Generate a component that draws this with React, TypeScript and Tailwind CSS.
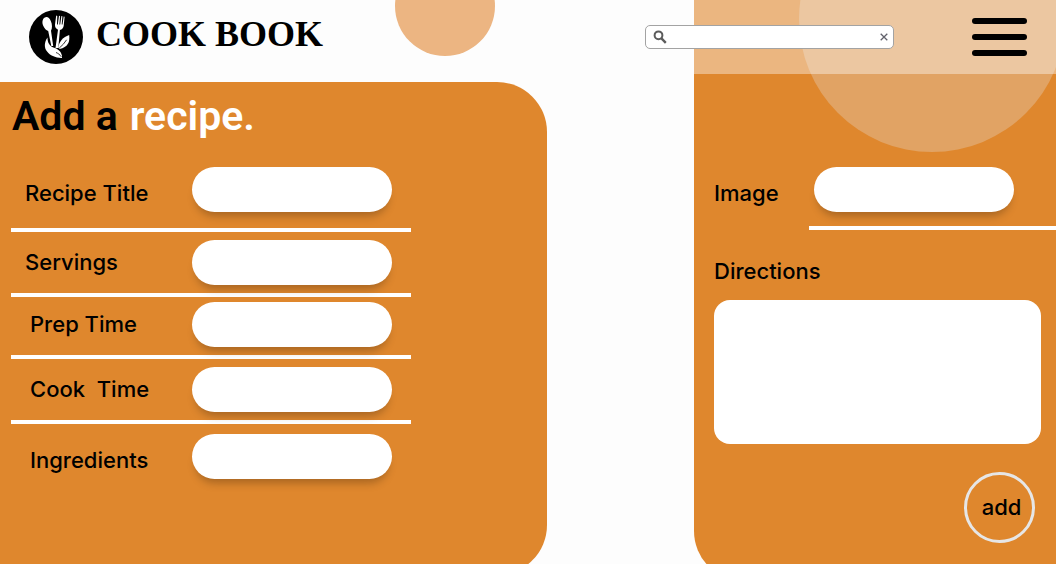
import React from "react";

type Field = { id: string; label: string; row: string };

const fields: Field[] = [
  { id: "title", label: "Recipe Title", row: "h-[65px] items-end border-b-4 pb-4 pl-3.5" },
  { id: "servings", label: "Servings", row: "h-[65px] items-center border-b-4 pl-3.5" },
  { id: "prep", label: "Prep Time", row: "h-[62px] items-center border-b-4 pb-1 pl-[19px]" },
  { id: "cook", label: "Cook  Time", row: "h-[65px] items-center border-b-4 pl-[19px]" },
  { id: "ingredients", label: "Ingredients", row: "h-[55px] items-end pl-[19px]" },
];

const labelClass = "whitespace-pre text-[22px] font-medium leading-[37px] text-black";
const pillClass =
  "h-[45px] w-[200px] shrink-0 rounded-full bg-white px-5 text-lg outline-none shadow-[0_8px_8px_-4px_rgba(0,0,0,0.25)]";

function Logo() {
  return (
    <svg viewBox="0 0 54 54" className="size-[54px] shrink-0" aria-hidden="true">
      <circle cx="27" cy="27" r="27" fill="#000" />
      <g fill="#fff">
        <path d="M17.200 7C13.600 7.600 12.600 12 14.200 15.800c1.100 2.700 3.100 4.600 5 5.300L22.300 36l1.900-.1-2.200-15.200c1.400-2.400 1.300-6.700-.2-9.800C20.700 8.300 19 6.800 17.200 7z" />
        <path d="M27.200 5.500 26 14.500c-.2 2.600 1 4.300 3 5.200L26.500 38h2.800l1.600-18c2.200-.6 3.500-2 3.800-4.300l.9-9-.9-.1-1.200 8h-.8l.7-8.400-1-.1-1.200 8.400h-.8l.6-8.600-1-.1-1.200 8.600h-.8l.3-8.400z" />
        <path d="M18.500 27.500c-3.400 4.800-3.600 10.500-.2 14.300 2.600 3.400 7.500 6 14.700 6.200-.7-4.500-3.600-8.200-8.200-10-3.900-1.700-6.500-5.300-6.300-10.500z" />
        <path d="M20 37c3.500.4 7.100.7 10 3.400 2.300 2 3.300 4.600 3 7.600-5.900-1.600-11.200-4.800-13-11z" />
        <path d="M40.200 25c.9 7.200-1.500 12.400-9.600 13.900l-1.400-1.400c1.100-6 4.700-10.400 11-12.500z" />
      </g>
      <path d="M30.300 38c2.900-2.300 5.300-5 7.300-8.200M27 42.500c2 .8 3.900 2.100 5.300 4.300" stroke="#000" strokeWidth=".8" fill="none" />
    </svg>
  );
}

function Header() {
  return (
    <header className="relative z-10 flex h-[74px] items-start self-start bg-[#fdfdfd]/40 pl-[29px] pr-[29px] [grid-area:1/1]">
      <div className="flex items-start gap-[13px] pt-2.5">
        <Logo />
        <h1 className="whitespace-nowrap font-['Liberation_Serif',serif] text-[36px] font-bold leading-[48px] text-black">
          COOK BOOK
        </h1>
      </div>
      <div className="absolute -top-11 left-[395px] size-[100px] rounded-full bg-[#ecb582]" />
      <div className="ml-auto mr-[78px] mt-[25px] flex h-6 w-[249px] items-center rounded-[5px] border border-[#a3a3a3] bg-white pl-[7px] pr-[5px]">
        <svg viewBox="0 0 14 14" className="size-3.5 shrink-0" aria-hidden="true">
          <circle cx="5.500" cy="5.300" r="3.900" fill="none" stroke="#5c5c5c" strokeWidth="2" />
          <path d="M8.200 8.200 12.800 12.800" stroke="#5c5c5c" strokeWidth="2.400" />
        </svg>
        <input aria-label="Search recipes" className="h-5 min-w-0 flex-1 bg-transparent px-2 text-sm outline-none" />
        <button type="button" aria-label="Clear search" className="shrink-0">
          <svg viewBox="0 0 8 8" className="size-2" aria-hidden="true">
            <path d="M.7.7 7.300 7.300M7.300.7.7 7.300" stroke="#62626c" strokeWidth="1.300" />
          </svg>
        </button>
      </div>
      <button type="button" aria-label="Menu" className="mt-[18px] flex w-[55px] flex-col gap-2.5">
        <span className="h-1.5 w-full rounded-full bg-black" />
        <span className="h-1.5 w-full rounded-full bg-black" />
        <span className="h-1.5 w-full rounded-full bg-black" />
      </button>
    </header>
  );
}

export default function App() {
  return (
    <div className="grid h-screen grid-cols-1 overflow-hidden bg-[#fdfdfd] font-[Inter,sans-serif]">
      <Header />
      <form className="grid grid-cols-[547fr_147fr_362fr] items-start [grid-area:1/1]">
        <section className="mt-[82px] h-[493px] rounded-r-[50px] bg-[#df872d] pl-[11px]">
          <h2 className="flex h-[85px] gap-3 pl-px pt-2.5 font-[Roboto,sans-serif] text-[41px] font-semibold leading-[48px] text-black">
            <span>Add a</span>
            <span className="text-white">recipe.</span>
          </h2>
          {fields.map((f) => (
            <div key={f.id} className={`flex w-[400px] justify-between border-white pr-[19px] ${f.row}`}>
              <label htmlFor={f.id} className={labelClass}>
                {f.label}
              </label>
              <input id={f.id} className={pillClass} />
            </div>
          ))}
        </section>

        <section className="relative col-start-3 flex h-[581px] flex-col rounded-bl-[50px] bg-[#df872d] pl-5 pt-[167px]">
          <div className="absolute -right-[9px] -top-[114px] size-[266px] rounded-full bg-[#e1a364]" />
          <div className="flex">
            <label htmlFor="image" className={`w-[95px] shrink-0 pt-2 ${labelClass}`}>
              Image
            </label>
            <div className="flex-1 border-b-4 border-white pb-3.5 pl-[5px]">
              <input id="image" className={`block ${pillClass}`} />
            </div>
          </div>
          <label htmlFor="directions" className={`mt-[23px] ${labelClass}`}>
            Directions
          </label>
          <textarea
            id="directions"
            className="mr-[15px] mt-2.5 h-36 resize-none rounded-2xl bg-white p-4 text-lg outline-none"
          />
          <button
            type="button"
            className="mr-[21px] mt-7 size-[71px] self-end rounded-full border-[3px] border-[#e6e6e6] pl-1 text-[22px] font-medium text-black"
          >
            add
          </button>
        </section>
      </form>
    </div>
  );
}
